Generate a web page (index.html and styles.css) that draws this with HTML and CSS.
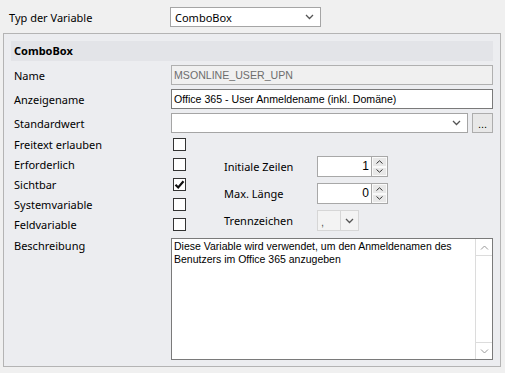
FILE: index.html
```html
<!DOCTYPE html>
<html lang="de">
<head>
  <meta charset="UTF-8">
  <title>Variable</title>
  <link rel="stylesheet" href="styles.css">
</head>
<body>
  <div class="top">
    <span class="top-label">Typ der Variable</span>
    <div class="combo combo-type">
      <span class="combo-text">ComboBox</span>
      <svg class="chev" width="9" height="6" viewBox="0 0 9 6"><polyline points="1,1 4.5,4.5 8,1" fill="none" stroke="#555" stroke-width="1.3"/></svg>
    </div>
  </div>

  <div class="panel">
    <div class="panel-head">ComboBox</div>

    <div class="row">
      <span class="lbl">Name</span>
      <div class="field field-off">MSONLINE_USER_UPN</div>
    </div>

    <div class="row">
      <span class="lbl">Anzeigename</span>
      <div class="field field-on">Office 365 - User Anmeldename (inkl. Domäne)</div>
    </div>

    <div class="row row-std">
      <span class="lbl">Standardwert</span>
      <div class="combo combo-std">
        <span class="combo-text"></span>
        <svg class="chev" width="9" height="6" viewBox="0 0 9 6"><polyline points="1,1 4.5,4.5 8,1" fill="none" stroke="#555" stroke-width="1.3"/></svg>
      </div>
      <div class="dots">...</div>
    </div>

    <div class="flags">
      <div class="flag-col">
        <div class="flag"><span class="lbl">Freitext erlauben</span><span class="check"></span></div>
        <div class="flag"><span class="lbl">Erforderlich</span><span class="check"></span></div>
        <div class="flag"><span class="lbl">Sichtbar</span><span class="check"><svg width="11" height="11" viewBox="0 0 11 11"><path d="M1.5 5.8 L4.2 8.5 L9.5 2.3" fill="none" stroke="#111" stroke-width="2.2"/></svg></span></div>
        <div class="flag"><span class="lbl">Systemvariable</span><span class="check"></span></div>
        <div class="flag"><span class="lbl">Feldvariable</span><span class="check"></span></div>
      </div>

      <div class="extra-col">
        <div class="extra extra-first">
          <span class="xlbl">Initiale Zeilen</span>
          <div class="spin">
            <span class="spin-val">1</span>
            <div class="spin-btns">
              <span class="spin-btn"><svg width="7" height="4" viewBox="0 0 7 4"><polyline points="0.5,3.5 3.5,0.8 6.5,3.5" fill="none" stroke="#333" stroke-width="1"/></svg></span>
              <span class="spin-btn"><svg width="7" height="4" viewBox="0 0 7 4"><polyline points="0.5,0.5 3.5,3.2 6.5,0.5" fill="none" stroke="#333" stroke-width="1"/></svg></span>
            </div>
          </div>
        </div>
        <div class="extra">
          <span class="xlbl">Max. Länge</span>
          <div class="spin">
            <span class="spin-val">0</span>
            <div class="spin-btns">
              <span class="spin-btn"><svg width="7" height="4" viewBox="0 0 7 4"><polyline points="0.5,3.5 3.5,0.8 6.5,3.5" fill="none" stroke="#333" stroke-width="1"/></svg></span>
              <span class="spin-btn"><svg width="7" height="4" viewBox="0 0 7 4"><polyline points="0.5,0.5 3.5,3.2 6.5,0.5" fill="none" stroke="#333" stroke-width="1"/></svg></span>
            </div>
          </div>
        </div>
        <div class="extra extra-sep">
          <span class="xlbl">Trennzeichen</span>
          <div class="sep-combo">
            <span class="sep-val">,</span>
            <span class="sep-btn"><svg width="9" height="6" viewBox="0 0 9 6"><polyline points="1,1 4.5,4.5 8,1" fill="none" stroke="#555" stroke-width="1.3"/></svg></span>
          </div>
        </div>
      </div>
    </div>

    <div class="desc">
      <span class="lbl desc-lbl">Beschreibung</span>
      <div class="memo">
        <div class="memo-text">Diese Variable wird verwendet, um den Anmeldenamen des Benutzers im Office 365 anzugeben</div>
        <div class="scroll">
          <span class="scroll-btn"><svg width="9" height="5" viewBox="0 0 9 5"><polyline points="1,4.5 4.5,1 8,4.5" fill="none" stroke="#999" stroke-width="1"/></svg></span>
          <span class="scroll-track"></span>
          <span class="scroll-btn"><svg width="9" height="5" viewBox="0 0 9 5"><polyline points="1,0.5 4.5,4 8,0.5" fill="none" stroke="#999" stroke-width="1"/></svg></span>
        </div>
      </div>
    </div>
  </div>
</body>
</html>
```

FILE: styles.css
```css
* {
  box-sizing: border-box;
}

body {
  margin: 0;
  width: 505px;
  height: 373px;
  overflow: hidden;
  background-color: #f0f0f0;
  font-family: "Noto Sans", sans-serif;
  font-size: 11px;
  color: #000;
}

.top {
  display: flex;
  align-items: center;
  padding-top: 7px;
  height: 27px;
}

.top-label {
  width: 170px;
  padding-left: 9px;
}

.combo {
  display: flex;
  align-items: center;
  height: 20px;
  background-color: #fff;
  border: 1px solid #a5a5a5;
}

.combo-text {
  flex: 1;
  padding-left: 4px;
}

.chev {
  margin-right: 6px;
}

.combo-type {
  width: 151px;
}

.panel {
  margin: 6px 4px 0 3px;
  height: 334px;
  border: 1px solid #b4b4b4;
  background-color: #ecedf0;
  padding: 7px 7px 0 7px;
}

.panel-head {
  height: 20px;
  line-height: 20px;
  padding-left: 3px;
  margin-bottom: 4px;
  background-color: #e3e4e8;
  font-weight: bold;
}

.row {
  display: flex;
  align-items: center;
  height: 20px;
  margin-bottom: 4px;
}

.row-std {
  margin-top: 1px;
  margin-bottom: 1px;
}

.lbl {
  width: 160px;
  padding-left: 3px;
  flex-shrink: 0;
}

.field {
  width: 322px;
  height: 20px;
  line-height: 18px;
  padding-left: 2px;
  font-family: "Liberation Sans", sans-serif;
  font-size: 10.6px;
}

.field-off {
  background-color: #f0f0f0;
  border: 1px solid #b0b0b0;
  color: #6d6d6d;
}

.field-on {
  background-color: #fff;
  border: 1px solid #7a7a7a;
}

.combo-std {
  width: 299px;
}

.dots {
  width: 21px;
  height: 20px;
  margin-left: 4px;
  border: 1px solid #adadad;
  background-color: #e8e8e8;
  text-align: center;
  line-height: 20px;
  font-family: "Liberation Sans", sans-serif;
  font-size: 11px;
}

.flags {
  display: flex;
  height: 100px;
  margin-bottom: 4px;
}

.flag-col {
  width: 213px;
}

.flag {
  display: flex;
  align-items: center;
  height: 20px;
}

.check {
  display: flex;
  align-items: center;
  justify-content: center;
  width: 13px;
  height: 13px;
  margin-left: 2px;
  border: 1px solid #333;
  background-color: #fff;
}

.extra-col {
  padding-top: 22px;
}

.extra {
  display: flex;
  align-items: center;
  height: 21px;
  margin-bottom: 6px;
}

.extra-sep {
  margin-top: 2px;
}

.xlbl {
  width: 93px;
}

.spin {
  display: flex;
  width: 71px;
  height: 21px;
  border: 1px solid #a8a8a8;
  background-color: #fff;
}

.spin-val {
  flex: 1;
  text-align: right;
  padding-right: 2px;
  line-height: 19px;
  font-family: "Liberation Sans", sans-serif;
  font-size: 12px;
}

.spin-btns {
  display: flex;
  flex-direction: column;
  width: 16px;
  border-left: 1px solid #a8a8a8;
}

.spin-btn {
  flex: 1;
  display: flex;
  align-items: center;
  justify-content: center;
  background-color: #e8e8e8;
  border: 1px solid #fafafa;
}

.sep-combo {
  display: flex;
  width: 42px;
  height: 21px;
  border: 1px solid #d6d6d6;
  background-color: #f3f3f3;
}

.sep-val {
  flex: 1;
  padding-left: 3px;
  font-family: "Liberation Sans", sans-serif;
  font-size: 11px;
  line-height: 22px;
  color: #555;
}

.sep-btn {
  display: flex;
  align-items: center;
  justify-content: center;
  width: 18px;
  border-left: 1px solid #d6d6d6;
}

.desc {
  display: flex;
}

.desc-lbl {
  line-height: 16px;
}

.memo {
  display: flex;
  width: 322px;
  height: 122px;
  border: 1px solid #7a7a7a;
  background-color: #fff;
}

.memo-text {
  flex: 1;
  padding: 1px 2px;
  font-family: "Liberation Sans", sans-serif;
  font-size: 10.5px;
  line-height: 13px;
}

.scroll {
  display: flex;
  flex-direction: column;
  width: 17px;
  border-left: 1px solid #dcdcdc;
  background-color: #fff;
}

.scroll-btn {
  display: flex;
  align-items: center;
  justify-content: center;
  height: 17px;
}

.scroll-btn:first-child {
  border-bottom: 1px solid #dcdcdc;
}

.scroll-btn:last-child {
  border-top: 1px solid #dcdcdc;
}

.scroll-track {
  flex: 1;
}
```
